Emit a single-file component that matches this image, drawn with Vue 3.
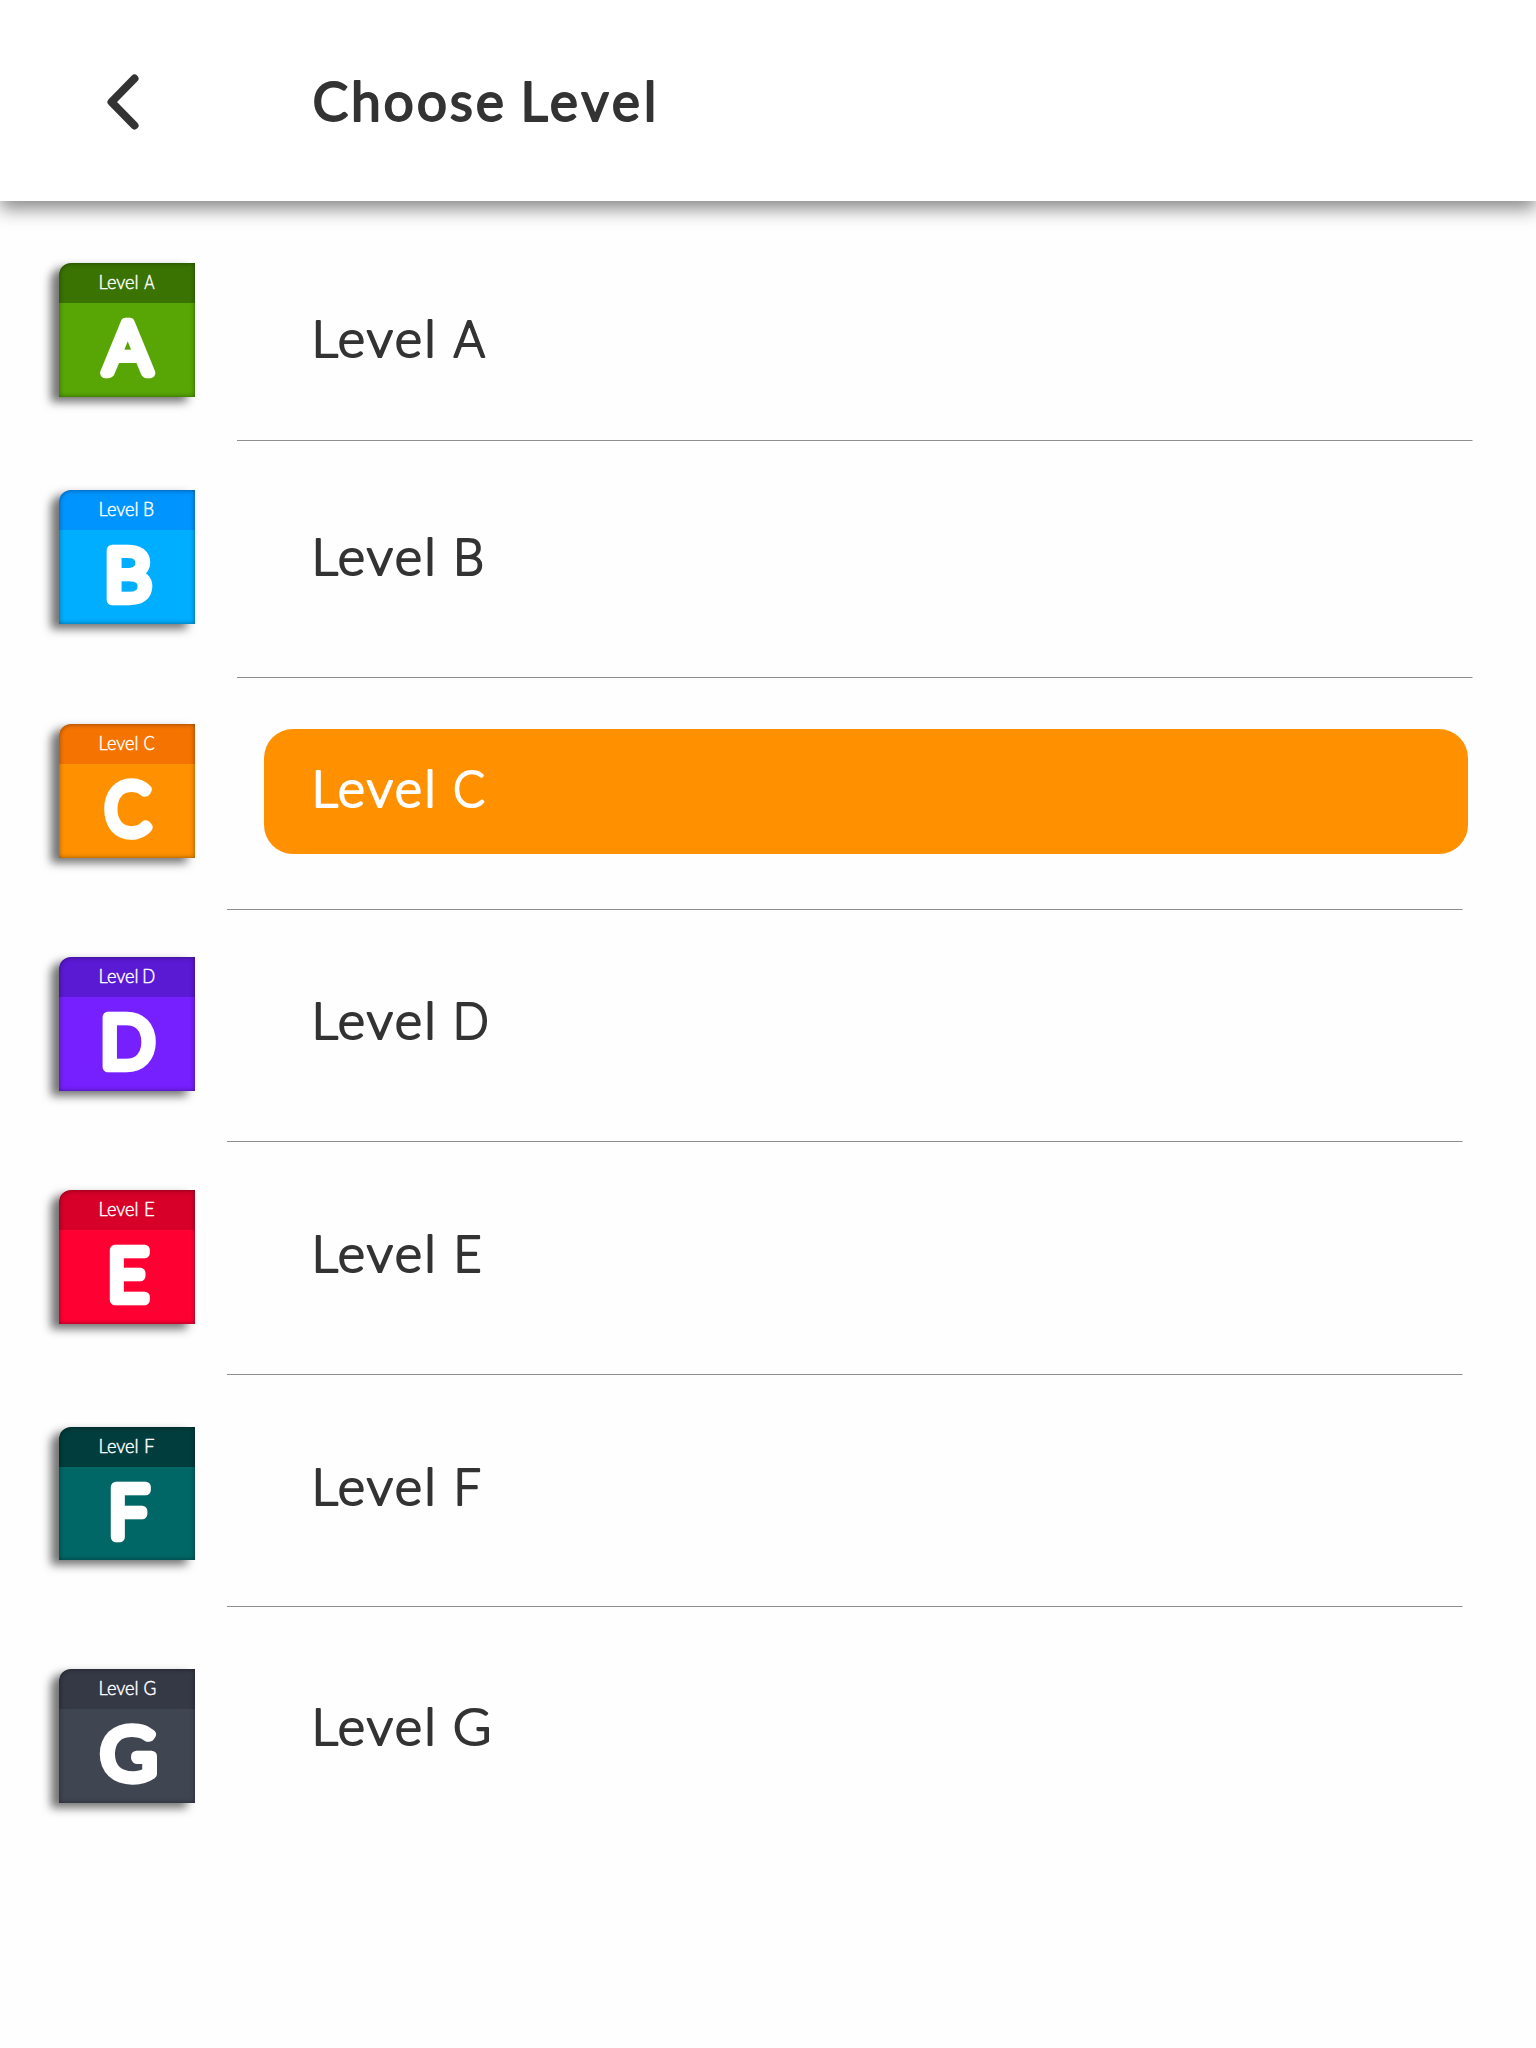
<script setup>
const levels = [
  { id: 'A', main: '#57a605', dark: '#3a7302', height: 240, top: 62, base: 156.8, line: 237, gx: 453, gw: 34, big: [40.7, 58], sx: 85, sw: 11 },
  { id: 'B', main: '#00aeff', dark: '#0094ff', height: 237, top: 49, base: 134.8, line: 237, gx: 456.5, gw: 27.5, big: [47.2, 48.5], sx: 85.5, sw: 9.5 },
  { id: 'C', main: '#ff9100', dark: '#f57300', height: 232, top: 46, base: 130.2, line: 227, gx: 454, gw: 30.5, big: [44, 50], sx: 85, sw: 10.5, selected: true },
  { id: 'D', main: '#7620ff', dark: '#5a19d3', height: 232, top: 47, base: 130.2, line: 227, gx: 456, gw: 31.5, big: [43, 54.5], sx: 84.5, sw: 11 },
  { id: 'E', main: '#ff0033', dark: '#d60029', height: 233, top: 48, base: 130.6, line: 227, gx: 457, gw: 23, big: [50, 40.5], sx: 86.5, sw: 8.5 },
  { id: 'F', main: '#006766', dark: '#003d3c', height: 232, top: 51.5, base: 130.6, line: 227, gx: 457, gw: 23, big: [51, 40.5], sx: 86.5, sw: 8.5 },
  { id: 'G', main: '#404552', dark: '#353945', height: 260, top: 62, base: 138.8, line: 0, gx: 454, gw: 35.5, big: [40.2, 58.3], sx: 85, sw: 11.5 },
]

// Left bearing and ink width of each capital, per em
const metrics = {
  A: [0.005, 0.67], B: [0.094, 0.514], C: [0.046, 0.6], D: [0.094, 0.617],
  E: [0.094, 0.43], F: [0.094, 0.43], G: [0.046, 0.635],
}

function fit(id, size, stroke, x, width, y) {
  const [bearing, ink] = metrics[id]
  const scale = (width - stroke) / (ink * size)
  return `translate(${x + stroke / 2 - bearing * size * scale} ${y}) scale(${scale} 1)`
}
</script>

<template>
  <main class="screen">
    <header class="bar">
      <svg class="back" width="40" height="64" viewBox="0 0 40 64">
        <path d="M34.5 8.5 11.5 32 34.5 55.5" />
      </svg>
      <svg class="title" width="400" height="80" viewBox="0 0 400 80">
        <text x="0.5" y="59" textLength="191.5" lengthAdjust="spacing">Choose</text>
        <text x="208.5" y="59" textLength="136" lengthAdjust="spacing">Level</text>
      </svg>
    </header>
    <ul class="list">
      <li v-for="level in levels" :key="level.id" class="row" :class="{ selected: level.selected }" :style="{ height: level.height + 'px', '--line': level.line + 'px' }">
        <div class="badge" :style="{ marginTop: level.top + 'px', background: `linear-gradient(${level.dark} 39.7px, ${level.main} 39.7px)` }">
          <svg width="136" height="134" viewBox="0 0 136 134">
            <text class="small" x="39.6" y="26.3" textLength="40" lengthAdjust="spacingAndGlyphs">Level</text>
            <text class="small" :transform="fit(level.id, 19.5, 0.5, level.sx, level.sw, 26.3)">{{ level.id }}</text>
            <text class="big" :transform="fit(level.id, 70.5, 10.5, level.big[0], level.big[1], 110.3)">{{ level.id }}</text>
          </svg>
        </div>
        <div class="option">
          <svg class="label" width="1204" :height="level.height - 1">
            <text :transform="`translate(47.6 ${level.base - 0.8}) scale(1.04 1)`" textLength="119.4" lengthAdjust="spacing">Level</text>
            <text :transform="fit(level.id, 50.3, 2.2, level.gx - 264, level.gw, level.base - 0.8)">{{ level.id }}</text>
          </svg>
        </div>
      </li>
    </ul>
  </main>
</template>

<style>
html, body { background: #fefefe; }
</style>

<style scoped>
.screen {
  width: 1536px;
  height: 2048px;
  overflow: hidden;
  background: #fefefe;
  color: #333;
  font-family: Lato, "Open Sans", sans-serif;
}
.bar {
  position: relative;
  z-index: 1;
  display: flex;
  align-items: center;
  height: 201px;
  box-sizing: border-box;
  padding-left: 100px;
  background: #fff;
  box-shadow: 0 8px 17px rgba(0, 0, 0, 0.46);
}
.back {
  margin-top: 2px;
}
.back path {
  fill: none;
  stroke: #333;
  stroke-width: 8;
  stroke-linecap: round;
  stroke-linejoin: round;
}
.title {
  margin-left: 172px;
  margin-top: 2px;
  fill: #333;
  stroke: #333;
  stroke-width: 1.8;
  stroke-linejoin: round;
  font-size: 53.5px;
  font-weight: 400;
}
.list {
  margin: 0;
  padding: 0;
  list-style: none;
}
.row {
  display: flex;
  align-items: flex-start;
  box-sizing: border-box;
  padding-left: 59px;
  background: linear-gradient(#8e8e90, #8e8e90) var(--line) 100% / 1235.5px 1px no-repeat;
}
.row:last-child {
  background: none;
}
.badge {
  flex: none;
  width: 136px;
  height: 133.7px;
  border-radius: 12px 0 0 0;
  box-shadow: -8px 5px 10px rgba(0, 0, 0, 0.55), inset 0 0 5px rgba(0, 0, 0, 0.45);
}
.badge svg, .label {
  display: block;
}
.small {
  fill: #fff;
  stroke: #fff;
  stroke-width: 0.5;
  stroke-linejoin: round;
  font-size: 19.5px;
  font-weight: 300;
}
.big {
  fill: #fff;
  stroke: #fff;
  stroke-width: 10.5;
  stroke-linejoin: round;
  font-size: 70.5px;
  font-weight: 300;
}
.option {
  margin-left: 69px;
  width: 1204px;
}
.selected .option {
  height: 124.5px;
  margin-top: 51px;
  border-radius: 29px;
  background: #ff9100;
}
.selected .label {
  margin-top: -51px;
}
.label text {
  fill: #333;
  stroke: #333;
  stroke-width: 2.2;
  stroke-linejoin: round;
  font-size: 50.3px;
  font-weight: 300;
}
.selected .label text {
  fill: #fff;
  stroke: #fff;
}
</style>
